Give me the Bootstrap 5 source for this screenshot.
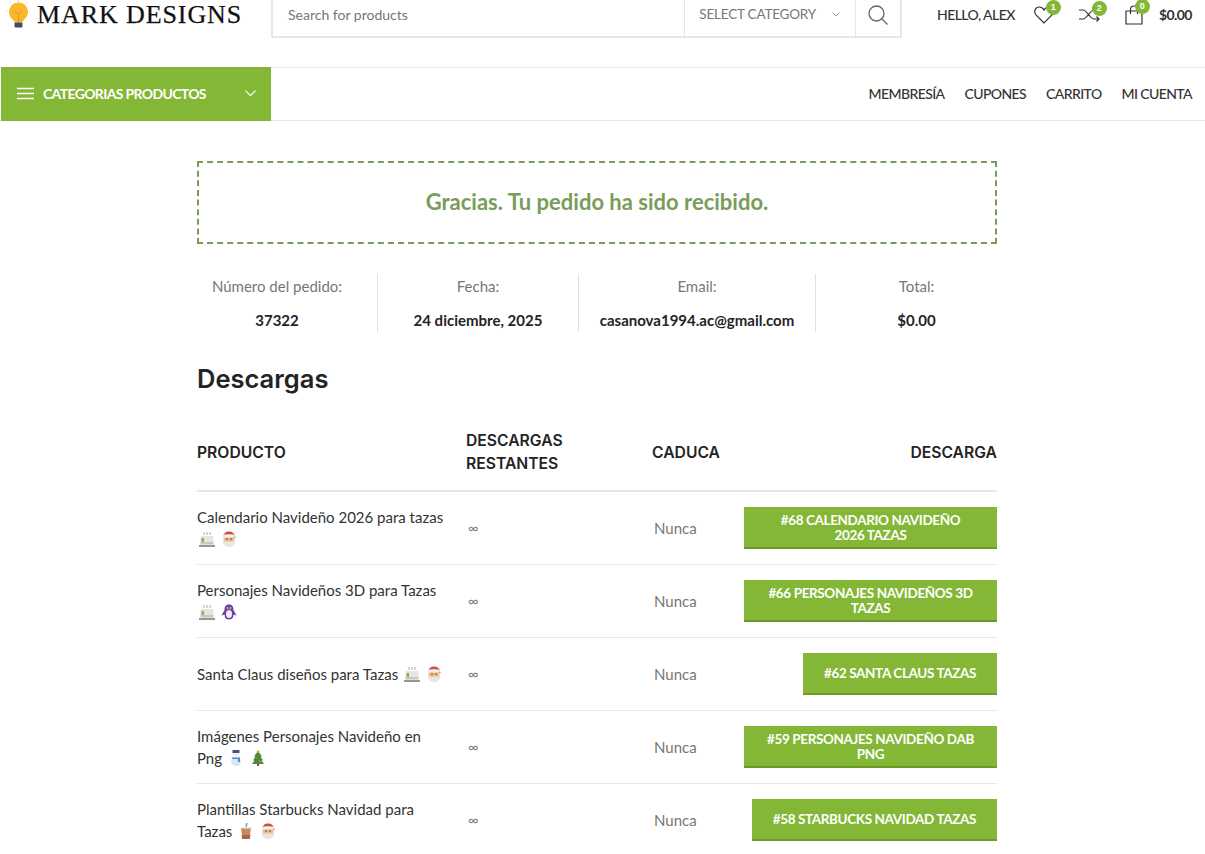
<!DOCTYPE html>
<html lang="es">
<head>
  <meta charset="UTF-8">
  <title>Pedido recibido</title>
  <link rel="stylesheet" href="https://cdn.jsdelivr.net/npm/bootstrap@5.3.0/dist/css/bootstrap.min.css">
  <style>
    body { font-family: Lato, "Liberation Sans", sans-serif; font-size: 15px; color: #242424; background: #fff; overflow: hidden; }
    a { color: inherit; text-decoration: none; }

    /* top row */
    .top-row { height: 67px; padding-right: 13px; }
    .logo-area { width: 271px; height: 29px; padding-left: 6px; flex-shrink: 0; }
    .logo-text { font-family: "Liberation Serif", serif; font-size: 26px; letter-spacing: .9px; line-height: 30px; color: #111; margin-left: 6px; -webkit-text-stroke: .25px #111; }
    .search-box { width: 631px; height: 38px; border: 2px solid #e6e6e6; border-top: 0; flex-shrink: 0; }
    .search-text { padding: 0 0 7px 15px; font-size: 14px; color: #777; width: 412px; }
    .search-cat { width: 172px; border-left: 1px solid #e6e6e6; border-right: 1px solid #e6e6e6; padding: 0 15px 7px 14px; font-size: 13.5px; letter-spacing: -.2px; color: #777; }
    .search-btn { width: 44px; padding-bottom: 6px; }
    .head-tools { margin-left: 35px; flex: 1; height: 29px; }
    .hello { font-size: 14px; font-weight: 500; letter-spacing: -.55px; color: #333; white-space: nowrap; }
    .tool-icon { position: relative; display: block; line-height: 0; margin-left: 25px; }
    .tool-first { margin-left: 19px; }
    .tool-count { position: absolute; top: -6px; right: -7px; width: 15px; height: 15px; border-radius: 50%; background: #83b735; color: #fff; font-family: "Liberation Sans", sans-serif; font-size: 9px; font-weight: 700; line-height: 15px; text-align: center; }
    .cart-total { margin-left: 16px; font-weight: 700; letter-spacing: -.6px; }

    /* menu row */
    .menu-row { height: 54px; border-top: 1px solid #e6e6e6; border-bottom: 1px solid #e6e6e6; padding-right: 13px; }
    .cat-btn { width: 270px; height: 54px; margin: -1px 0 -1px 1px; background: #83b735; color: #fff; padding: 0 15px 2px 16px; font-size: 14px; font-weight: 700; letter-spacing: -.65px; }
    .cat-label { margin-left: 1px; }
    .menu-links { gap: 20px; padding-bottom: 2px; font-size: 14px; font-weight: 500; letter-spacing: -.6px; color: #333; }

    /* order */
    .order-wrap { width: 800px; margin: 40px 0 0 197px; }
    .thanks-box { height: 83px; padding-bottom: 2px; border: 2px dashed #7a9c59; color: #7a9c59; font-size: 22px; font-weight: 700; }
    .order-info { margin-top: 30px; height: 58px; }
    .info-item { text-align: center; color: #777; font-size: 15px; line-height: 24px; border-right: 1px solid #e1e1e1; }
    .info-item strong { display: block; margin-top: 10px; color: #242424; font-weight: 700; }
    .info-a { width: 181px; padding-right: 20px; }
    .info-b { width: 201px; }
    .info-c { width: 237px; }
    .info-d { width: 181px; padding-left: 20px; border-right: 0; }

    .down-title { font-family: Inter, "Open Sans", sans-serif; font-size: 25.5px; font-weight: 600; line-height: 32px; color: #242424; margin: 31px 0 24px; }
    .down-table { table-layout: fixed; width: 800px; margin: 0; }
    .down-table th { font-family: Inter, "Open Sans", sans-serif; font-size: 15.7px; font-weight: 600; line-height: 23px; color: #242424; text-transform: uppercase; padding: 10px 0 15px; border-bottom: 2px solid #e6e6e6; vertical-align: middle; }
    .down-table td { height: 73px; padding: 0; vertical-align: middle; font-size: 15px; line-height: 22px; color: #333; border-bottom: 1px solid #e6e6e6; }
    .td-left { padding-left: 2px !important; font-size: 14px !important; color: #777 !important; }
    .td-never { color: #777 !important; padding-left: 2px !important; }
    .get-btn { display: inline-block; min-height: 42px; max-width: 253px; padding: 6px 21px 4px; border: 0; border-bottom: 2px solid #6c9a28; border-radius: 0; background: #83b735; color: #fff; font-size: 13.5px; font-weight: 700; line-height: 15px; letter-spacing: -.38px; text-transform: uppercase; text-align: center; vertical-align: middle; }
    .get-btn:hover { background: #83b735; color: #fff; }
    .get-one { padding-top: 13px; }
    .emo { vertical-align: -2px; margin-left: 2px; }
  </style>
</head>
<body>

<!-- icons used more than once -->
<svg width="0" height="0" class="d-block">
  <symbol id="mug" viewBox="0 0 16 16">
    <path d="M5 1v3M8 1v3M11 1v3" stroke="#aaa" fill="none"/>
    <rect x="1.500" y="5" width="13" height="8.500" rx="1" fill="#e6e6e0"/>
    <rect x="1.500" y="11" width="13" height="2.500" fill="#c9c9c4"/>
    <rect x="2.500" y="7" width="2.500" height="4" fill="#7db84e"/>
    <path d="M0 15h16" stroke="#5d4d44" stroke-width="1.200"/>
  </symbol>
  <symbol id="santa" viewBox="0 0 16 16">
    <path d="M2 6Q3 0 8.500 .5q5.500 .5 6 6.500z" fill="#d9473f"/>
    <circle cx="8" cy="8.500" r="5.500" fill="#eebb85"/>
    <rect x="2" y="3.500" width="12" height="3" rx="1.500" fill="#f1f1f1"/>
    <circle cx="6" cy="8" r=".8" fill="#5a4030"/><circle cx="10" cy="8" r=".8" fill="#5a4030"/>
    <path d="M2 9q1 1.500 3 1.500h6q2 0 3-1.500q1 6.500-6 7q-7-.5-6-7z" fill="#e6e6e6"/>
  </symbol>
</svg>

<!-- Top row with logo, search and account tools -->
<header class="top-row d-flex align-items-start">
  <a class="logo-area d-flex align-items-center" href="#">
    <svg width="25" height="29" viewBox="0 0 25 29">
      <g stroke="#f6d98a" stroke-width="1"><path d="M12.500 0v2M4 2l1.500 1.500M21 2l-1.500 1.500M.5 11h1.500M24.500 11h-1.500"/></g>
      <path d="M12.500 2.500a9.500 9.500 0 0 0-6 16.800c1.200 1 1.800 1.800 1.800 3.200h8.400c0-1.400.6-2.200 1.800-3.200a9.500 9.500 0 0 0-6-16.800z" fill="#f9b82c"/>
      <path d="M9 11l3.500 4 3.500-4M12.500 15v7.500" stroke="#e8951c" fill="none"/>
      <rect x="8.500" y="22.500" width="8" height="5" rx="1" fill="#454d5c"/>
    </svg>
    <span class="logo-text">MARK DESIGNS</span>
  </a>

  <div class="search-box d-flex align-items-stretch">
    <div class="search-text d-flex align-items-center">Search for products</div>
    <div class="search-cat d-flex align-items-center justify-content-between">
      <span>SELECT CATEGORY</span>
      <svg width="8" height="5" viewBox="0 0 8 5"><path d="M.5.500 4 4 7.500.5" fill="none" stroke="#999"/></svg>
    </div>
    <div class="search-btn d-flex align-items-center justify-content-center">
      <svg width="20" height="20" viewBox="0 0 20 20" fill="none" stroke="#666" stroke-width="1.300"><circle cx="8.500" cy="8.500" r="7.500"/><path d="M14 14 19.500 19.500"/></svg>
    </div>
  </div>

  <div class="head-tools d-flex align-items-center">
    <a class="hello" href="#">HELLO, ALEX</a>
    <a class="tool-icon tool-first" href="#">
      <svg width="20" height="18" viewBox="0 0 20 18" fill="none" stroke="#333" stroke-width="1.200"><path d="M10 17 2 8.800C-.5 6 1 1 5.300 1 7.500 1 9 2.300 10 4c1-1.700 2.500-3 4.700-3C19 1 20.500 6 18 8.800z"/></svg>
      <span class="tool-count">1</span>
    </a>
    <a class="tool-icon" href="#">
      <svg width="21" height="15" viewBox="0 0 21 15" fill="none" stroke="#333" stroke-width="1.200"><path d="M0 3h4c4 0 7 9 11 9h5M0 12h4c4 0 7-9 11-9h5M17.500 .5 20 3l-2.500 2.500M17.500 9.500 20 12l-2.500 2.500"/></svg>
      <span class="tool-count">2</span>
    </a>
    <a class="tool-icon" href="#">
      <svg width="18" height="20" viewBox="0 0 18 20" fill="none" stroke="#333" stroke-width="1.200"><path d="M1 6h16v13H1zM5.500 9V4.500a3.500 3.500 0 0 1 7 0V9"/></svg>
      <span class="tool-count">0</span>
    </a>
    <span class="hello cart-total">$0.00</span>
  </div>
</header>

<!-- Menu row -->
<nav class="menu-row d-flex align-items-center justify-content-between">
  <a class="cat-btn d-flex align-items-center justify-content-between" href="#">
    <span class="d-flex align-items-center gap-2">
      <svg width="17" height="13" viewBox="0 0 17 13" fill="none" stroke="#fff" stroke-width="1.500"><path d="M0 1.500h17M0 6.500h17M0 11.500h17"/></svg>
      <span class="cat-label">CATEGORIAS PRODUCTOS</span>
    </span>
    <svg width="11" height="7" viewBox="0 0 11 7" fill="none" stroke="#fff" stroke-width="1.200"><path d="M.5.700 5.500 5.700 10.500.7"/></svg>
  </a>
  <div class="menu-links d-flex">
    <a href="#">MEMBRESÍA</a>
    <a href="#">CUPONES</a>
    <a href="#">CARRITO</a>
    <a href="#">MI CUENTA</a>
  </div>
</nav>

<main class="order-wrap">
  <div class="thanks-box d-flex align-items-center justify-content-center">Gracias. Tu pedido ha sido recibido.</div>

  <div class="order-info d-flex">
    <div class="info-item info-a">Número del pedido:<strong>37322</strong></div>
    <div class="info-item info-b">Fecha:<strong>24 diciembre, 2025</strong></div>
    <div class="info-item info-c">Email:<strong>casanova1994.ac@gmail.com</strong></div>
    <div class="info-item info-d">Total:<strong>$0.00</strong></div>
  </div>

  <h2 class="down-title">Descargas</h2>

  <table class="table table-borderless down-table">
    <colgroup><col style="width:269px"><col style="width:186px"><col style="width:90px"><col></colgroup>
    <thead>
      <tr>
        <th>Producto</th>
        <th>Descargas restantes</th>
        <th>Caduca</th>
        <th class="text-end">Descarga</th>
      </tr>
    </thead>
    <tbody>
      <tr>
        <td>Calendario Navideño 2026 para tazas<br><svg class="emo" width="16" height="16"><use href="#mug"/></svg> <svg class="emo" width="16" height="16"><use href="#santa"/></svg></td>
        <td class="td-left">∞</td>
        <td class="td-never">Nunca</td>
        <td class="text-end"><a class="btn get-btn" href="#">#68 Calendario Navideño 2026 Tazas</a></td>
      </tr>
      <tr>
        <td>Personajes Navideños 3D para Tazas<br><svg class="emo" width="16" height="16"><use href="#mug"/></svg> <svg class="emo" width="16" height="16" viewBox="0 0 16 16"><path d="M8 .5c-3.500 0-4.500 2.500-4.500 5.500L.5 11.500l3-1q0 5 4.500 5t4.500-5l3 1L12.500 6c0-3-1-5.500-4.500-5.500z" fill="#6b3fa0"/><ellipse cx="8" cy="10" rx="3" ry="4" fill="#f0eef4"/><path d="M6.800 5.500h2.400L8 7.500z" fill="#f0a030"/><circle cx="6.500" cy="4" r=".8" fill="#fff"/><circle cx="9.500" cy="4" r=".8" fill="#fff"/></svg></td>
        <td class="td-left">∞</td>
        <td class="td-never">Nunca</td>
        <td class="text-end"><a class="btn get-btn" href="#">#66 Personajes Navideños 3D Tazas</a></td>
      </tr>
      <tr>
        <td>Santa Claus diseños para Tazas <svg class="emo" width="16" height="16"><use href="#mug"/></svg> <svg class="emo" width="16" height="16"><use href="#santa"/></svg></td>
        <td class="td-left">∞</td>
        <td class="td-never">Nunca</td>
        <td class="text-end"><a class="btn get-btn get-one" href="#">#62 Santa Claus Tazas</a></td>
      </tr>
      <tr>
        <td>Imágenes Personajes Navideño en<br>Png <svg class="emo" width="16" height="16" viewBox="0 0 16 16"><circle cx="8" cy="11" r="5" fill="#dfe2ef"/><circle cx="8" cy="5" r="3.500" fill="#eef0f6"/><rect x="4.500" y="0" width="7" height="3" fill="#44557a"/><path d="M4 7.500h8v1.500H4zM10 8h2v4h-2z" fill="#4a8fd8"/></svg> <svg class="emo" width="16" height="16" viewBox="0 0 16 16"><path d="M8 1 4 6.500h1.500L3 10.500h1.500L2 14h12l-2.500-3.500H13l-2.500-4H12z" fill="#4f8a3c"/><rect x="7" y="14" width="2" height="2" fill="#7a5230"/><circle cx="8" cy="1.500" r="1.200" fill="#e8b030"/><circle cx="7" cy="8" r=".8" fill="#e05a4a"/><circle cx="10" cy="11" r=".8" fill="#e8b030"/></svg></td>
        <td class="td-left">∞</td>
        <td class="td-never">Nunca</td>
        <td class="text-end"><a class="btn get-btn" href="#">#59 Personajes Navideño DAB PNG</a></td>
      </tr>
      <tr>
        <td>Plantillas Starbucks Navidad para<br>Tazas <svg class="emo" width="16" height="16" viewBox="0 0 16 16"><path d="M3 5h10l-1.500 11h-7z" fill="#c98a5c"/><path d="M3.500 12h9l-.7 4H4.200z" fill="#a9683f"/><rect x="2.500" y="4" width="11" height="1.500" fill="#eee"/><path d="M8 4 9 0" stroke="#6aa7d8" stroke-width="1.500"/></svg> <svg class="emo" width="16" height="16"><use href="#santa"/></svg></td>
        <td class="td-left">∞</td>
        <td class="td-never">Nunca</td>
        <td class="text-end"><a class="btn get-btn get-one" href="#">#58 Starbucks Navidad Tazas</a></td>
      </tr>
    </tbody>
  </table>
</main>

<script src="https://cdn.jsdelivr.net/npm/bootstrap@5.3.0/dist/js/bootstrap.bundle.min.js"></script>
</body>
</html>
